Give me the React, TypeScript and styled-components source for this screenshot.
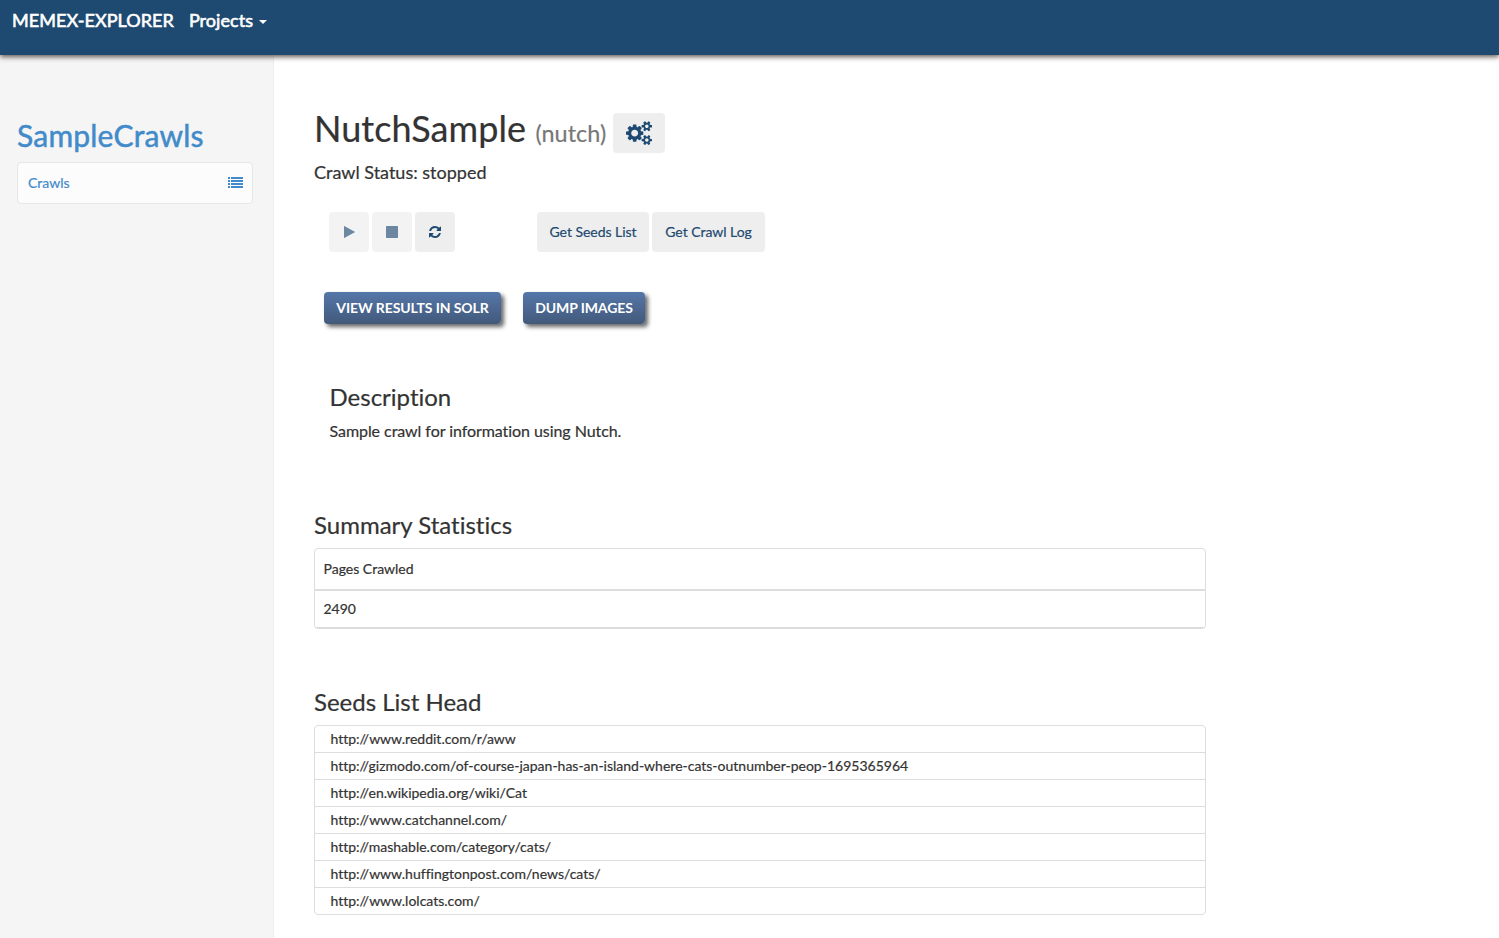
import React from "react";
import styled, { createGlobalStyle } from "styled-components";

const Global = createGlobalStyle`
  * { box-sizing: border-box; }
  html, body, #root { height: 100%; }
  body {
    margin: 0;
    background: #fff;
    color: #333;
    font: 14px/20px Lato, "Liberation Sans", sans-serif;
    font-variant-ligatures: none;
    -webkit-text-stroke: 0.2px;
    overflow: hidden;
  }
  h1, h2, h3, p, ul { margin: 0; padding: 0; font-weight: 400; }
`;

const Page = styled.div`
  display: flex;
  flex-direction: column;
  height: 938px;
`;

const Navbar = styled.header`
  position: relative;
  z-index: 1;
  flex: none;
  display: flex;
  align-items: flex-start;
  gap: 15px;
  height: 55px;
  padding: 10px 12px;
  background: #1e4970;
  color: #fff;
  font-size: 18px;
  letter-spacing: 0.06px;
  box-shadow: 0 2px 5px rgba(60, 50, 45, 0.8);
`;

const NavItem = styled.span`
  display: flex;
  align-items: center;
  font-weight: 400;
  -webkit-text-stroke: 0.6px #fff;
`;

const Caret = styled.span`
  margin: 3px 0 0 6px;
  border-top: 4px solid #fff;
  border-left: 4px solid transparent;
  border-right: 4px solid transparent;
`;

const Body = styled.div`
  flex: 1;
  display: flex;
  min-height: 0;
`;

const Sidebar = styled.aside`
  flex: none;
  width: 274px;
  padding: 62px 20px 0 17px;
  background: #f5f5f5;
  border-right: 1px solid #eee;
  color: #428bca;
`;

const ProjectName = styled.h2`
  font-size: 30px;
  line-height: 36px;
  letter-spacing: 0.2px;
  -webkit-text-stroke: 0.5px;
`;

const SideLink = styled.div`
  display: flex;
  align-items: center;
  justify-content: space-between;
  height: 42px;
  margin-top: 9px;
  padding: 0 9px 0 10px;
  border: 1px solid #e7e7e7;
  border-radius: 4px;
  background: #fcfcfc;
  svg { margin-top: -1px; }
`;

const Main = styled.main`
  width: 932px;
  padding: 58px 0 0 40px;
`;

const TitleRow = styled.div`
  display: flex;
  align-items: flex-start;
  gap: 7px;
  height: 40px;
`;

const Title = styled.h1`
  width: 292px;
  margin-top: -1px;
  font-size: 36px;
  line-height: 32px;
  letter-spacing: 0.06px;
  white-space: nowrap;
`;

const Kind = styled.small`
  font-size: 23.4px;
  color: #777;
`;

const Status = styled.p`
  margin-top: 8px;
  font-size: 18px;
  line-height: 22px;
`;

const Toolbar = styled.div`
  display: flex;
  gap: 3px;
  margin: 29px 0 0 15px;
`;

const Tool = styled.button<{ $width: number; $faded?: boolean; $gap?: number }>`
  display: flex;
  flex: none;
  align-items: center;
  justify-content: center;
  width: ${(p) => p.$width}px;
  height: 40px;
  margin: 0 0 0 ${(p) => p.$gap ?? 0}px;
  padding: 0;
  border: 0;
  border-radius: 4px;
  background: #eee;
  color: #1e4970;
  font: inherit;
  font-variant-ligatures: none;
  letter-spacing: -0.04px;
  opacity: ${(p) => (p.$faded ? 0.65 : 1)};
`;

const Actions = styled.div`
  display: flex;
  gap: 22px;
  margin: 40px 0 0 10px;
`;

const Action = styled.button<{ $width: number }>`
  width: ${(p) => p.$width}px;
  height: 32px;
  padding: 0;
  border: 0;
  border-radius: 4px;
  background: linear-gradient(#5577a9, #42597b);
  box-shadow: 3px 3px 4px rgba(0, 0, 0, 0.6);
  color: #fff;
  font: 700 14px/32px Lato, sans-serif;
  letter-spacing: -0.09px;
  -webkit-text-stroke: 0;
`;

const Description = styled.section`
  margin: 59px 0 0 15.500px;
  font-size: 16px;
`;

const Heading = styled.h3`
  font-size: 24px;
  line-height: 28px;
`;

const DescriptionText = styled.p`
  margin-top: 10px;
  line-height: 20px;
  letter-spacing: -0.06px;
`;

const Section = styled.section<{ $top: number }>`
  margin-top: ${(p) => p.$top}px;
`;

const Panel = styled.div`
  margin-top: 9px;
  border: 1px solid #ddd;
  border-radius: 4px;
`;

const StatHead = styled.div`
  height: 42px;
  padding-left: 8.500px;
  border-bottom: 2px solid #ddd;
  line-height: 40px;
`;

const StatValue = styled.div`
  height: 37px;
  padding-left: 8.500px;
  border-bottom: 1px solid #ddd;
  line-height: 35px;
`;

const SeedList = styled(Panel).attrs({ as: "ul" })`
  list-style: none;
`;

const Seed = styled.li`
  height: 27px;
  padding-left: 15.500px;
  line-height: 25px;
  & + & { border-top: 1px solid #ddd; }
  &:first-child { height: 26px; }
`;

const CogsIcon = () => (
  <svg width="26" height="24.3" viewBox="0 0 1920 1792" fill="currentColor">
    <path d="M896 896q0-106-75-181t-181-75-181 75-75 181 75 181 181 75 181-75 75-181zm768 512q0-52-38-90t-90-38-90 38-38 90q0 53 37.5 90.5t90.5 37.5 90.5-37.5 37.5-90.5zm0-1024q0-52-38-90t-90-38-90 38-38 90q0 53 37.5 90.5t90.5 37.5 90.5-37.5 37.5-90.5zm-384 421v185q0 10-7 19.5t-16 10.5l-155 24q-11 35-32 76 34 48 90 115 7 11 7 20 0 12-7 19-23 30-82.5 89.5t-78.5 59.5q-11 0-21-7l-115-90q-37 19-77 31-11 108-23 155-7 24-30 24h-186q-11 0-20-7.5t-10-17.5l-23-153q-34-10-75-31l-118 89q-7 7-20 7-11 0-21-8-144-133-144-160 0-9 7-19 10-14 41-53t47-61q-23-44-35-82l-152-24q-10-1-17-9.5t-7-19.5v-185q0-10 7-19.5t16-10.5l155-24q11-35 32-76-34-48-90-115-7-11-7-20 0-12 7-20 22-30 82-89t79-59q11 0 21 7l115 90q34-18 77-32 11-108 23-154 7-24 30-24h186q11 0 20 7.5t10 17.5l23 153q34 10 75 31l118-89q8-7 20-7 11 0 21 8 144 133 144 160 0 8-7 19-12 16-42 54t-45 60q23 48 34 82l152 23q10 2 17 10.5t7 19.5zm640 533v140q0 16-149 31-12 27-30 52 51 113 51 138 0 4-4 7-122 71-124 71-8 0-46-47t-52-68q-20 2-30 2t-30-2q-14 21-52 68t-46 47q-2 0-124-71-4-3-4-7 0-25 51-138-18-25-30-52-149-15-149-31v-140q0-16 149-31 13-29 30-52-51-113-51-138 0-4 4-7 4-2 35-20t59-34 30-16q8 0 46 46.5t52 67.5q20-2 30-2t30 2q51-71 92-112l6-2q4 0 124 70 4 3 4 7 0 25-51 138 17 23 30 52 149 15 149 31zm0-1024v140q0 16-149 31-12 27-30 52 51 113 51 138 0 4-4 7-122 71-124 71-8 0-46-47t-52-68q-20 2-30 2t-30-2q-14 21-52 68t-46 47q-2 0-124-71-4-3-4-7 0-25 51-138-18-25-30-52-149-15-149-31v-140q0-16 149-31 13-29 30-52-51-113-51-138 0-4 4-7 4-2 35-20t59-34 30-16q8 0 46 46.5t52 67.5q20-2 30-2t30 2q51-71 92-112l6-2q4 0 124 70 4 3 4 7 0 25-51 138 17 23 30 52 149 15 149 31z" />
  </svg>
);

const RefreshIcon = () => (
  <svg width="12" height="12" viewBox="0 128 1536 1536" fill="currentColor">
    <path d="M1511 1056q0 5-1 7-64 268-268 434.5t-478 166.5q-146 0-282.5-55t-243.5-157l-129 129q-19 19-45 19t-45-19-19-45v-448q0-26 19-45t45-19h448q26 0 45 19t19 45-19 45l-137 137q71 66 161 102t187 36q134 0 250-65t186-179q11-17 53-117 8-23 30-23h192q13 0 22.500 9.500t9.500 22.500zm25-800v448q0 26-19 45t-45 19h-448q-26 0-45-19t-19-45 19-45l138-138q-148-137-349-137-134 0-250 65t-186 179q-11 17-53 117-8 23-30 23h-199q-13 0-22.500-9.500t-9.500-22.500v-7q65-268 270-434.500t480-166.500q146 0 284 55.500t245 156.500l130-129q19-19 45-19t45 19 19 45z" />
  </svg>
);

const PlayIcon = () => (
  <svg width="11" height="12" viewBox="0 0 11 12" fill="currentColor">
    <path d="M0 .2v11.600q0 .3.300.100L10.800 6.200q.3-.2 0-.4L.300.100Q0 0 0 .2z" />
  </svg>
);

const StopIcon = () => (
  <svg width="12" height="12" viewBox="0 0 12 12" fill="currentColor">
    <rect width="12" height="12" rx=".4" />
  </svg>
);

const ListIcon = () => (
  <svg width="15" height="11" viewBox="0 0 15 11" fill="currentColor">
    {[0, 3, 6, 9].map((y) => (
      <React.Fragment key={y}>
        <rect y={y} width="2" height="2" />
        <rect x="3" y={y} width="12" height="2" />
      </React.Fragment>
    ))}
  </svg>
);

const seeds = [
  "http://www.reddit.com/r/aww",
  "http://gizmodo.com/of-course-japan-has-an-island-where-cats-outnumber-peop-1695365964",
  "http://en.wikipedia.org/wiki/Cat",
  "http://www.catchannel.com/",
  "http://mashable.com/category/cats/",
  "http://www.huffingtonpost.com/news/cats/",
  "http://www.lolcats.com/",
];

export default function App() {
  return (
    <Page>
      <Global />
      <Navbar>
        <NavItem>MEMEX-EXPLORER</NavItem>
        <NavItem>Projects<Caret /></NavItem>
      </Navbar>
      <Body>
        <Sidebar>
          <ProjectName>SampleCrawls</ProjectName>
          <SideLink>Crawls<ListIcon /></SideLink>
        </Sidebar>
        <Main>
          <TitleRow>
            <Title>NutchSample <Kind>(nutch)</Kind></Title>
            <Tool $width={52}><CogsIcon /></Tool>
          </TitleRow>
          <Status>Crawl Status: stopped</Status>
          <Toolbar>
            <Tool $width={40} $faded><PlayIcon /></Tool>
            <Tool $width={40} $faded><StopIcon /></Tool>
            <Tool $width={40}><RefreshIcon /></Tool>
            <Tool $width={112} $gap={79}>Get Seeds List</Tool>
            <Tool $width={113}>Get Crawl Log</Tool>
          </Toolbar>
          <Actions>
            <Action $width={177}>VIEW RESULTS IN SOLR</Action>
            <Action $width={122}>DUMP IMAGES</Action>
          </Actions>
          <Description>
            <Heading>Description</Heading>
            <DescriptionText>Sample crawl for information using Nutch.</DescriptionText>
          </Description>
          <Section $top={70}>
            <Heading>Summary Statistics</Heading>
            <Panel>
              <StatHead>Pages Crawled</StatHead>
              <StatValue>2490</StatValue>
            </Panel>
          </Section>
          <Section $top={59}>
            <Heading>Seeds List Head</Heading>
            <SeedList>
              {seeds.map((s) => <Seed key={s}>{s}</Seed>)}
            </SeedList>
          </Section>
        </Main>
      </Body>
    </Page>
  );
}
